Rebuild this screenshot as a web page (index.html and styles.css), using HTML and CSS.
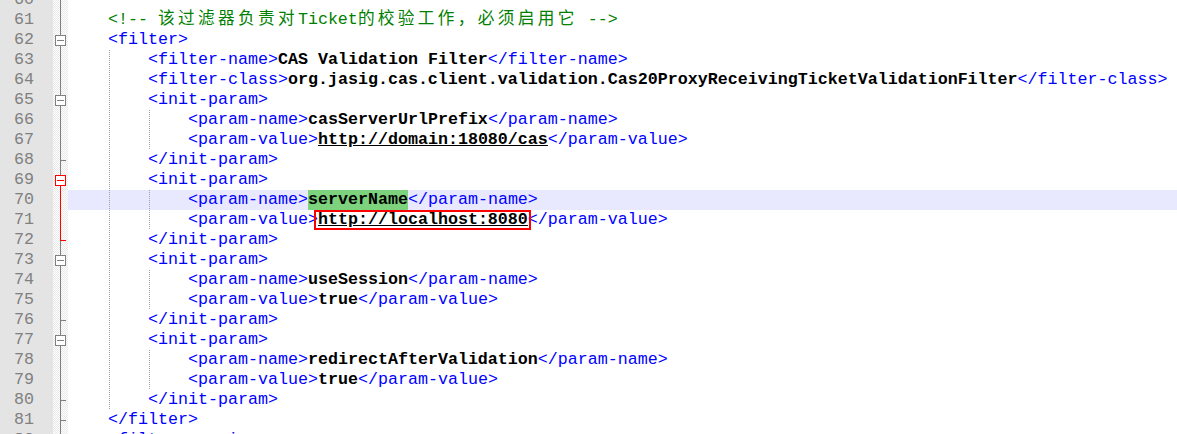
FILE: index.html
```html
<!DOCTYPE html>
<html lang="zh-CN">
<head>
  <meta charset="UTF-8">
  <title>web.xml</title>
  <link rel="stylesheet" href="styles.css">
</head>
<body>
  <div class="editor">
    <div class="row"><div class="num">60</div><div class="fold"></div><div class="code"></div></div>
    <div class="row"><div class="num">61</div><div class="fold"></div><div class="code"><span class="i"></span><span class="c">&lt;!-- <span class="cjk">该过滤器负责对</span>Ticket<span class="cjk">的校验工作，必须启用它</span> --&gt;</span></div></div>
    <div class="row"><div class="num">62</div><div class="fold"><span class="box"></span></div><div class="code"><span class="i"></span><span class="t">&lt;filter&gt;</span></div></div>
    <div class="row"><div class="num">63</div><div class="fold"></div><div class="code"><span class="i"></span><span class="i g"></span><span class="t">&lt;filter-name&gt;</span><span class="v">CAS Validation Filter</span><span class="t">&lt;/filter-name&gt;</span></div></div>
    <div class="row"><div class="num">64</div><div class="fold"></div><div class="code"><span class="i"></span><span class="i g"></span><span class="t">&lt;filter-class&gt;</span><span class="v">org.jasig.cas.client.validation.Cas20ProxyReceivingTicketValidationFilter</span><span class="t">&lt;/filter-class&gt;</span></div></div>
    <div class="row"><div class="num">65</div><div class="fold"><span class="box"></span></div><div class="code"><span class="i"></span><span class="i g"></span><span class="t">&lt;init-param&gt;</span></div></div>
    <div class="row"><div class="num">66</div><div class="fold"></div><div class="code"><span class="i"></span><span class="i g"></span><span class="i g"></span><span class="t">&lt;param-name&gt;</span><span class="v">casServerUrlPrefix</span><span class="t">&lt;/param-name&gt;</span></div></div>
    <div class="row"><div class="num">67</div><div class="fold"></div><div class="code"><span class="i"></span><span class="i g"></span><span class="i g"></span><span class="t">&lt;param-value&gt;</span><span class="v url">http://domain:18080/cas</span><span class="t">&lt;/param-value&gt;</span></div></div>
    <div class="row"><div class="num">68</div><div class="fold end"></div><div class="code"><span class="i"></span><span class="i g"></span><span class="t">&lt;/init-param&gt;</span></div></div>
    <div class="row"><div class="num">69</div><div class="fold red-open"><span class="box red"></span></div><div class="code"><span class="i"></span><span class="i g"></span><span class="t">&lt;init-param&gt;</span></div></div>
    <div class="row cur"><div class="num">70</div><div class="fold red-mid"></div><div class="code"><span class="i"></span><span class="i g"></span><span class="i g"></span><span class="t">&lt;param-name&gt;</span><span class="v hl">serverName</span><span class="t">&lt;/param-name&gt;</span></div></div>
    <div class="row"><div class="num">71</div><div class="fold red-mid"></div><div class="code"><span class="i"></span><span class="i g"></span><span class="i g"></span><span class="t">&lt;param-value&gt;</span><span class="v url mark">http://localhost:8080</span><span class="t">&lt;/param-value&gt;</span></div></div>
    <div class="row"><div class="num">72</div><div class="fold red-end"></div><div class="code"><span class="i"></span><span class="i g"></span><span class="t">&lt;/init-param&gt;</span></div></div>
    <div class="row"><div class="num">73</div><div class="fold"><span class="box"></span></div><div class="code"><span class="i"></span><span class="i g"></span><span class="t">&lt;init-param&gt;</span></div></div>
    <div class="row"><div class="num">74</div><div class="fold"></div><div class="code"><span class="i"></span><span class="i g"></span><span class="i g"></span><span class="t">&lt;param-name&gt;</span><span class="v">useSession</span><span class="t">&lt;/param-name&gt;</span></div></div>
    <div class="row"><div class="num">75</div><div class="fold"></div><div class="code"><span class="i"></span><span class="i g"></span><span class="i g"></span><span class="t">&lt;param-value&gt;</span><span class="v">true</span><span class="t">&lt;/param-value&gt;</span></div></div>
    <div class="row"><div class="num">76</div><div class="fold end"></div><div class="code"><span class="i"></span><span class="i g"></span><span class="t">&lt;/init-param&gt;</span></div></div>
    <div class="row"><div class="num">77</div><div class="fold"><span class="box"></span></div><div class="code"><span class="i"></span><span class="i g"></span><span class="t">&lt;init-param&gt;</span></div></div>
    <div class="row"><div class="num">78</div><div class="fold"></div><div class="code"><span class="i"></span><span class="i g"></span><span class="i g"></span><span class="t">&lt;param-name&gt;</span><span class="v">redirectAfterValidation</span><span class="t">&lt;/param-name&gt;</span></div></div>
    <div class="row"><div class="num">79</div><div class="fold"></div><div class="code"><span class="i"></span><span class="i g"></span><span class="i g"></span><span class="t">&lt;param-value&gt;</span><span class="v">true</span><span class="t">&lt;/param-value&gt;</span></div></div>
    <div class="row"><div class="num">80</div><div class="fold end"></div><div class="code"><span class="i"></span><span class="i g"></span><span class="t">&lt;/init-param&gt;</span></div></div>
    <div class="row"><div class="num">81</div><div class="fold end"></div><div class="code"><span class="i"></span><span class="t">&lt;/filter&gt;</span></div></div>
    <div class="row"><div class="num">82</div><div class="fold"></div><div class="code"><span class="i"></span><span class="t">&lt;filter-mapping&gt;</span></div></div>
  </div>
</body>
</html>
```

FILE: styles.css
```css
/* Editor base */
body {
  margin: 0;
  background: #fff;
  overflow: hidden;
  font-family: "Liberation Mono", "Noto Sans CJK SC", monospace;
  font-size: 16.67px;
}

.editor {
  margin-top: -10px;
}

.row {
  display: flex;
  height: 20px;
  line-height: 20px;
}

/* Line numbers */
.num {
  flex: none;
  width: 34px;
  padding-right: 19px;
  text-align: right;
  background: #e4e4e4;
  color: #808080;
}

/* Fold margin */
.fold {
  flex: none;
  width: 15px;
  display: flex;
  align-items: center;
  justify-content: center;
  background:
    linear-gradient(#808080, #808080) 7px 0 / 1px 100% no-repeat,
    repeating-conic-gradient(#e8e8e8 0 25%, #fff 0 50%) 0 0 / 2px 2px;
}

.fold.end {
  background:
    linear-gradient(#808080, #808080) 7px 10px / 6px 1px no-repeat,
    linear-gradient(#808080, #808080) 7px 0 / 1px 100% no-repeat,
    repeating-conic-gradient(#e8e8e8 0 25%, #fff 0 50%) 0 0 / 2px 2px;
}

.fold.red-open {
  background:
    linear-gradient(#808080, #808080) 7px 0 / 1px 5px no-repeat,
    linear-gradient(#f00, #f00) 7px 5px / 1px 15px no-repeat,
    repeating-conic-gradient(#e8e8e8 0 25%, #fff 0 50%) 0 0 / 2px 2px;
}

.fold.red-mid {
  background:
    linear-gradient(#f00, #f00) 7px 0 / 1px 100% no-repeat,
    repeating-conic-gradient(#e8e8e8 0 25%, #fff 0 50%) 0 0 / 2px 2px;
}

.fold.red-end {
  background:
    linear-gradient(#f00, #f00) 7px 0 / 1px 11px no-repeat,
    linear-gradient(#f00, #f00) 7px 10px / 6px 1px no-repeat,
    linear-gradient(#808080, #808080) 7px 11px / 1px 9px no-repeat,
    repeating-conic-gradient(#e8e8e8 0 25%, #fff 0 50%) 0 0 / 2px 2px;
}

.box {
  width: 9px;
  height: 9px;
  border: 1px solid #808080;
  background: #fff;
  display: flex;
  align-items: center;
  justify-content: center;
}

.box::before {
  content: "";
  width: 7px;
  height: 1px;
  background: #808080;
}

.box.red {
  border-color: #f00;
}

.box.red::before {
  background: #f00;
}

/* Code area */
.code {
  flex: 1;
  white-space: pre;
  color: #000;
}

.row.cur .code {
  background: #e8e8ff;
}

.i {
  display: inline-block;
  width: 40px;
  height: 20px;
  vertical-align: top;
}

.i.g {
  background: repeating-linear-gradient(to bottom, #a0a0a0 0 1px, transparent 1px 2px) 1px 0 / 1px 100% no-repeat;
}

.t {
  color: #0000ff;
}

.v {
  font-weight: bold;
}

.c {
  color: #008000;
}

.cjk {
  letter-spacing: 3.33px;
}

.url {
  text-decoration: underline;
}

.hl {
  display: inline-block;
  height: 20px;
  vertical-align: top;
  background: #7dd37d;
}

/* screenshot annotation */
.mark {
  position: relative;
}

.mark::after {
  content: "";
  position: absolute;
  left: -4px;
  right: -3px;
  top: 0;
  bottom: -1px;
  border: 2px solid #f00;
}
```
